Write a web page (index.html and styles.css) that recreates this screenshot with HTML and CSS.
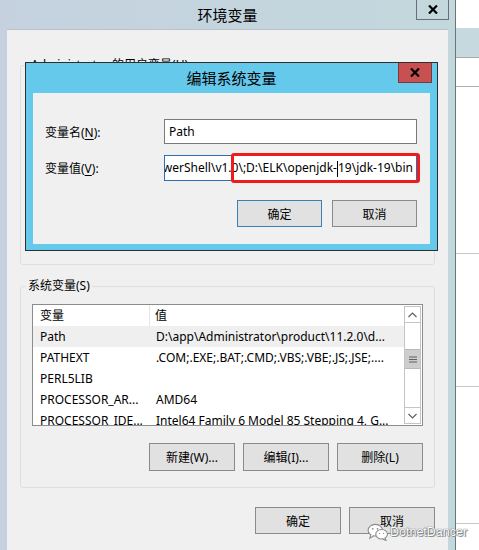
FILE: index.html
```html
<!DOCTYPE html>
<html lang="zh-CN">
<head>
<meta charset="utf-8">
<title>环境变量</title>
<link rel="stylesheet" href="styles.css">
</head>
<body>
<div class="desktop">
  <div class="win">
    <div class="titlebar">
      <div></div>
      <div class="title">环境变量</div>
      <div class="close outer-close">
        <svg width="10" height="9" viewBox="0 0 10 9"><path d="M1 0.5 L9 8.5 M9 0.5 L1 8.5" stroke="#000" stroke-width="2.2" fill="none"/></svg>
      </div>
    </div>
    <div class="client">
      <div class="group user-group">
        <span class="legend">Administrator 的用户变量(U)</span>
      </div>
      <div class="group sys-group">
        <span class="legend">系统变量(S)</span>
        <div class="list">
          <div class="list-body">
            <div class="row header"><div class="c1">变量</div><div class="c2">值</div></div>
            <div class="row sel"><div class="c1">Path</div><div class="c2">D:\app\Administrator\product\11.2.0\d...</div></div>
            <div class="row"><div class="c1">PATHEXT</div><div class="c2">.COM;.EXE;.BAT;.CMD;.VBS;.VBE;.JS;.JSE;....</div></div>
            <div class="row"><div class="c1">PERL5LIB</div><div class="c2"></div></div>
            <div class="row"><div class="c1">PROCESSOR_AR...</div><div class="c2">AMD64</div></div>
            <div class="row"><div class="c1">PROCESSOR_IDE...</div><div class="c2">Intel64 Family 6 Model 85 Stepping 4, G...</div></div>
          </div>
          <div class="scrollbar">
            <div class="sb-btn sb-up">
              <svg width="9" height="6" viewBox="0 0 9 6"><path d="M0.5 5 L4.5 1 L8.5 5" stroke="#606060" stroke-width="1.2" fill="none"/></svg>
            </div>
            <div class="sb-gap"></div>
            <div class="sb-thumb">
              <svg width="8" height="7" viewBox="0 0 8 7"><path d="M0 1 H8 M0 3.5 H8 M0 6 H8" stroke="#606060" stroke-width="1.2" fill="none"/></svg>
            </div>
            <div class="sb-track"></div>
            <div class="sb-btn sb-down">
              <svg width="9" height="6" viewBox="0 0 9 6"><path d="M0.5 1 L4.5 5 L8.5 1" stroke="#606060" stroke-width="1.2" fill="none"/></svg>
            </div>
          </div>
        </div>
        <div class="btn-row list-btns">
          <div class="btn">新建(W)...</div>
          <div class="btn">编辑(I)...</div>
          <div class="btn">删除(L)</div>
        </div>
      </div>
      <div class="btn-row bottom-btns">
        <div class="btn">确定</div>
        <div class="btn">取消</div>
      </div>
    </div>

    <div class="dialog">
      <div class="titlebar dlg-titlebar">
        <div></div>
        <div class="title">编辑系统变量</div>
        <div class="close dlg-close">
          <svg width="10" height="9" viewBox="0 0 10 9"><path d="M1 0.5 L9 8.5 M9 0.5 L1 8.5" stroke="#000" stroke-width="2.2" fill="none"/></svg>
        </div>
      </div>
      <div class="dlg-client">
        <div class="field">
          <div class="label">变量名(<span class="ul">N</span>):</div>
          <div class="input"><span>Path</span></div>
        </div>
        <div class="field field2">
          <div class="label">变量值(<span class="ul">V</span>):</div>
          <div class="input focused"><span class="val">PowerShell\v1.0\;D:\ELK\openjdk-<i class="caret"></i>19\jdk-19\bin</span></div>
        </div>
        <div class="btn-row dlg-btns">
          <div class="btn default">确定</div>
          <div class="btn">取消</div>
        </div>
        <div class="highlight"></div>
      </div>
    </div>
  </div>

  <div class="bg-strip">
    <div class="bs-top"></div>
    <div class="bs-band"></div>
    <div class="bs-a"></div>
    <div class="bs-b"></div>
    <div class="bs-c"></div>
    <div class="bs-d"></div>
  </div>

  <div class="watermark">
    <svg width="22" height="18" viewBox="0 0 24 20">
      <ellipse cx="9" cy="8" rx="8" ry="6.5" fill="#fff" stroke="#8a8a8a" stroke-width="1.2"/>
      <path d="M4 13 L3 17 L7.5 14" fill="#fff" stroke="#8a8a8a" stroke-width="1.2"/>
      <ellipse cx="16" cy="12.5" rx="6.5" ry="5.3" fill="#fff" stroke="#8a8a8a" stroke-width="1.2"/>
      <path d="M19.5 16.5 L21 19.5 L17 17.5" fill="#fff" stroke="#8a8a8a" stroke-width="1.2"/>
      <circle cx="6.2" cy="6.5" r="1" fill="#8a8a8a"/>
      <circle cx="11.5" cy="6.5" r="1" fill="#8a8a8a"/>
      <circle cx="13.8" cy="11.5" r="0.8" fill="#8a8a8a"/>
      <circle cx="18.2" cy="11.5" r="0.8" fill="#8a8a8a"/>
    </svg>
    <span class="wm-text">DotnetDancer</span>
  </div>
</div>
</body>
</html>
```

FILE: styles.css
```css
* { box-sizing: border-box; }

html, body {
  margin: 0;
  padding: 0;
  width: 479px;
  height: 550px;
  overflow: hidden;
  background: #ffffff;
  font-family: "Noto Sans", "Noto Sans CJK SC", sans-serif;
  font-size: 12px;
  color: #000;
}

.desktop {
  position: relative;
  display: flex;
  width: 479px;
  height: 550px;
}

/* ---------- outer window ---------- */
.win {
  position: relative;
  width: 456px;
  height: 550px;
  flex: none;
  display: flex;
  flex-direction: column;
  background: linear-gradient(to right, #c5d1df, #c3d8dd);
  border-right: 1px solid #6d7479;
}

.titlebar {
  display: grid;
  grid-template-columns: 1fr auto 1fr;
  height: 29px;
  flex: none;
}

.title {
  font-family: "Noto Sans CJK SC", sans-serif;
  font-size: 15px;
  line-height: 29px;
  text-align: center;
  color: #000;
}

.close {
  justify-self: end;
  display: flex;
  align-items: center;
  justify-content: center;
}

.outer-close {
  width: 33px;
  height: 20px;
  margin-right: 6px;
  border: 1px solid #66707a;
  border-top: none;
}

.client {
  flex: 1;
  margin: 0 7px;
  background: #f0f0f0;
  border-top: 1px solid #b9c1c9;
  padding: 0 13px;
}

/* ---------- group boxes ---------- */
.group {
  border: 1px solid #dedede;
  border-radius: 3px;
  padding: 0 11px;
}

.legend {
  display: inline-block;
  height: 16px;
  line-height: 16px;
  margin-top: -9px;
  margin-left: -6px;
  padding: 0 2px;
  background: #f0f0f0;
  vertical-align: top;
  white-space: nowrap;
}

.user-group {
  margin-top: 35px;
  height: 200px;
}

.user-group .legend {
  margin-left: -3px;
}

.sys-group {
  margin-top: 21px;
  height: 202px;
  display: flex;
  flex-direction: column;
  align-items: stretch;
}

.sys-group .legend {
  align-self: flex-start;
}

/* ---------- list view ---------- */
.list {
  margin-top: 10px;
  height: 122px;
  border: 1px solid #8c8c8c;
  background: #fff;
  display: flex;
}

.list-body {
  flex: 1;
  overflow: hidden;
}

.row {
  display: flex;
  height: 21px;
  line-height: 21px;
  white-space: nowrap;
}

.row .c1 {
  width: 117px;
  flex: none;
  padding-left: 7px;
  overflow: hidden;
}

.row .c2 {
  flex: 1;
  padding-left: 6px;
  overflow: hidden;
}

.row.header .c1 {
  border-right: 1px solid #e5e5e5;
}

.row.header .c2 {
  padding-left: 5px;
}

.row.sel {
  background: #efefef;
}

.scrollbar {
  width: 17px;
  flex: none;
  margin: 1px 1px 1px 0;
  border: 1px solid #c4c4c4;
  display: flex;
  flex-direction: column;
  background: #fff;
}

.sb-btn {
  height: 16px;
  flex: none;
  display: flex;
  align-items: center;
  justify-content: center;
}

.sb-up { border-bottom: 1px solid #c4c4c4; }
.sb-down { border-top: 1px solid #c4c4c4; }

.sb-gap { height: 26px; flex: none; }
.sb-track { flex: 1; }

.sb-thumb {
  height: 20px;
  flex: none;
  background: #cdcdcd;
  border-top: 1px solid #b8b8b8;
  border-bottom: 1px solid #b8b8b8;
  display: flex;
  align-items: center;
  justify-content: center;
}

/* ---------- buttons ---------- */
.btn-row {
  display: flex;
  justify-content: flex-end;
  gap: 8px;
}

.btn {
  width: 86px;
  height: 28px;
  border: 1px solid #8a8a8a;
  background: #e1e1e1;
  display: flex;
  align-items: center;
  justify-content: center;
  white-space: nowrap;
}

.list-btns {
  margin-top: 17px;
}

.bottom-btns {
  margin-top: 19px;
}

.bottom-btns .btn {
  height: 27px;
}

/* ---------- edit dialog ---------- */
.dialog {
  position: absolute;
  left: 25px;
  top: 62px;
  width: 413px;
  height: 189px;
  border: 1px solid #2e2e2e;
  background: #65c9eb;
  display: flex;
  flex-direction: column;
}

.dlg-titlebar {
  height: 30px;
}

.dlg-titlebar .title {
  line-height: 30px;
}

.dlg-close {
  width: 34px;
  height: 20px;
  margin-right: 5px;
  background: #c75050;
  border: 1px solid #7a3a3a;
  border-top: none;
}

.dlg-client {
  position: relative;
  flex: 1;
  margin: 0 7px 6px 7px;
  background: #f0f0f0;
  padding: 26px 13px 0 12px;
}

.field {
  display: flex;
  align-items: center;
  height: 25px;
}

.field2 {
  margin-top: 11px;
  height: 26px;
}

.label {
  width: 119px;
  flex: none;
  white-space: nowrap;
}

.ul {
  text-decoration: underline;
  text-underline-offset: 2px;
}

.input {
  flex: 1;
  min-width: 0;
  height: 100%;
  border: 1px solid #7a7a7a;
  background: #fff;
  display: flex;
  align-items: center;
  padding-left: 4px;
  white-space: nowrap;
  overflow: hidden;
}

.input.focused {
  border-color: #2a6fb5;
  justify-content: flex-end;
  padding-left: 0;
  padding-right: 3px;
}

.val {
  flex: none;
}

.caret {
  display: inline-block;
  width: 1px;
  height: 16px;
  background: #000;
  vertical-align: middle;
}

.dlg-btns {
  margin-top: 19px;
  gap: 10px;
}

.dlg-btns .btn {
  width: 85px;
  height: 27px;
}

.btn.default {
  border-color: #3c7fb1;
}

.highlight {
  position: absolute;
  left: 198px;
  top: 60px;
  width: 189px;
  height: 30px;
  border: 3px solid #f01c1c;
  border-radius: 3px;
}

/* ---------- background window strip ---------- */
.bg-strip {
  flex: 1;
  display: flex;
  flex-direction: column;
  background: #fff;
}

.bs-top { height: 28px; }
.bs-band { height: 30px; background: #c5d9de; border-bottom: 1px solid #a8a8a8; }
.bs-a { height: 29px; border-bottom: 1px solid #b0b0b0; }
.bs-b { height: 167px; border-bottom: 1px solid #c8c8c8; }
.bs-c { height: 133px; border-bottom: 1px solid #c8c8c8; }
.bs-d { height: 137px; border-bottom: 1px solid #c8c8c8; }

/* ---------- watermark ---------- */
.watermark {
  position: absolute;
  left: 367px;
  top: 523px;
  display: flex;
  align-items: center;
  gap: 1px;
}

.wm-text {
  font-family: "Liberation Sans", sans-serif;
  font-size: 12.5px;
  color: #fff;
  white-space: nowrap;
  text-shadow: 0 0 1px #666, 0 0 1px #666, 1px 1px 0 #9a9a9a;
}
```
